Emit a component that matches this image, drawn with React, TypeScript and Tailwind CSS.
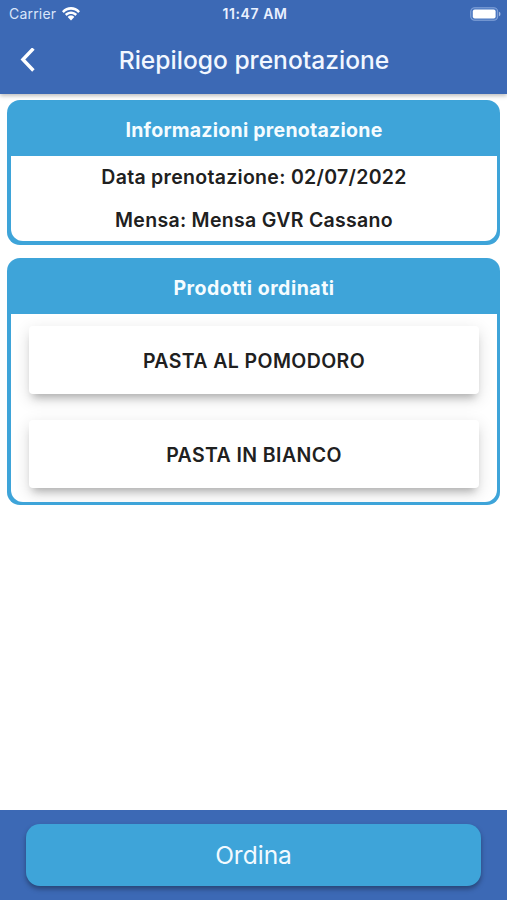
import type { ReactNode } from "react";

function StatusBar() {
  return (
    <div className="flex h-[27px] items-center justify-between pr-[6px] pl-[9px] text-white">
      <div className="flex flex-1 items-center gap-[6px]">
        <span className="text-[14px] leading-none tracking-[0.2px] text-[#d9e5fa]">Carrier</span>
        <svg width="18" height="14" viewBox="0 0 18 14" fill="white">
          <path d="M0 4.2C5-1.4 13-1.4 18 4.2L16.2 6C12.2 1.8 5.8 1.8 1.8 6Z" />
          <path d="M2.9 7.1C6.3 3.5 11.7 3.5 15.1 7.1L13.3 8.9C10.8 6.4 7.2 6.4 4.7 8.9Z" />
          <path d="M5.7 10C7.6 8.1 10.4 8.1 12.3 10L9 13.4Z" />
        </svg>
      </div>
      <span className="text-[14px] leading-none font-semibold tracking-[0.6px] text-[#eaf1ff]">11:47 AM</span>
      <div className="flex flex-1 justify-end">
        <svg width="31" height="14" viewBox="0 0 31 14">
          <rect x="0.7" y="0.7" width="27" height="12.6" rx="4" fill="#4b78c2" stroke="#82a2d8" strokeWidth="1.1" />
          <rect x="2.8" y="2.6" width="22.8" height="8.9" rx="2" fill="white" />
          <path d="M29 4.8Q30.5 5.3 30.5 7T29 9.2Z" fill="#a2bae2" />
        </svg>
      </div>
    </div>
  );
}

function Card({ title, tracking, children }: { title: string; tracking: string; children: ReactNode }) {
  return (
    <section className="rounded-[13px] bg-[#3ea4d9] px-[3.5px] pb-[3.5px]">
      <h2
        className={`flex h-[55.5px] items-center justify-center pt-[5px] pl-[1px] text-[19.5px] font-bold text-[#f5fcff] ${tracking}`}
      >
        {title}
      </h2>
      <div className="overflow-hidden rounded-b-[12px] bg-white">{children}</div>
    </section>
  );
}

function Product({ name }: { name: string }) {
  return (
    <div className="flex h-[67.5px] items-center justify-center rounded-[4px] bg-white pt-[3.5px] pl-[1px] text-[19.5px] font-semibold tracking-[0.4px] shadow-[0_7px_8px_-4px_rgba(0,0,0,0.25),0_5px_16px_1px_rgba(0,0,0,0.12)]">
      {name}
    </div>
  );
}

export default function App() {
  return (
    <div className="flex h-[900px] w-[507px] flex-col overflow-hidden bg-white font-['Inter',sans-serif] whitespace-nowrap text-[#202020]">
      <header className="z-10 h-[94px] shrink-0 bg-[#3c69b5] shadow-[0_2px_4px_rgba(0,0,0,0.25)]">
        <StatusBar />
        <div className="flex h-[66px] items-center">
          <button className="flex w-[56px] justify-start pl-[20px]" aria-label="Indietro">
            <svg width="16" height="25" viewBox="0 0 16 25" fill="none" stroke="white" strokeWidth="3.4">
              <path d="M13.4 0.5L2.9 11.5L13.4 22.5" />
            </svg>
          </button>
          <h1 className="mr-[55px] flex-1 text-center text-[24.6px] font-medium text-[#f2f7ff]">Riepilogo prenotazione</h1>
        </div>
      </header>
      <main className="flex flex-1 flex-col gap-[13.5px] px-[7px] pt-[6px]">
        <Card title="Informazioni prenotazione" tracking="tracking-[0.25px]">
          <div className="flex h-[85.5px] flex-col items-center pt-[0.5px] pl-[1px] text-[19.5px] leading-[43px] font-semibold tracking-[0.3px]">
            <p>Data prenotazione: 02/07/2022</p>
            <p>Mensa: Mensa GVR Cassano</p>
          </div>
        </Card>
        <Card title="Prodotti ordinati" tracking="tracking-[0.5px]">
          <div className="flex h-[188px] flex-col gap-[26.5px] px-[18px] pt-[12.5px]">
            <Product name="PASTA AL POMODORO" />
            <Product name="PASTA IN BIANCO" />
          </div>
        </Card>
      </main>
      <footer className="h-[90px] shrink-0 bg-[#3c69b5] px-[26px] pt-[14px]">
        <button className="flex h-[62px] w-full items-center justify-center rounded-[14px] bg-[#3ea4d9] text-[24.5px] text-[#f2faff] shadow-[0_3px_5px_rgba(0,0,0,0.35)]">
          Ordina
        </button>
      </footer>
    </div>
  );
}
